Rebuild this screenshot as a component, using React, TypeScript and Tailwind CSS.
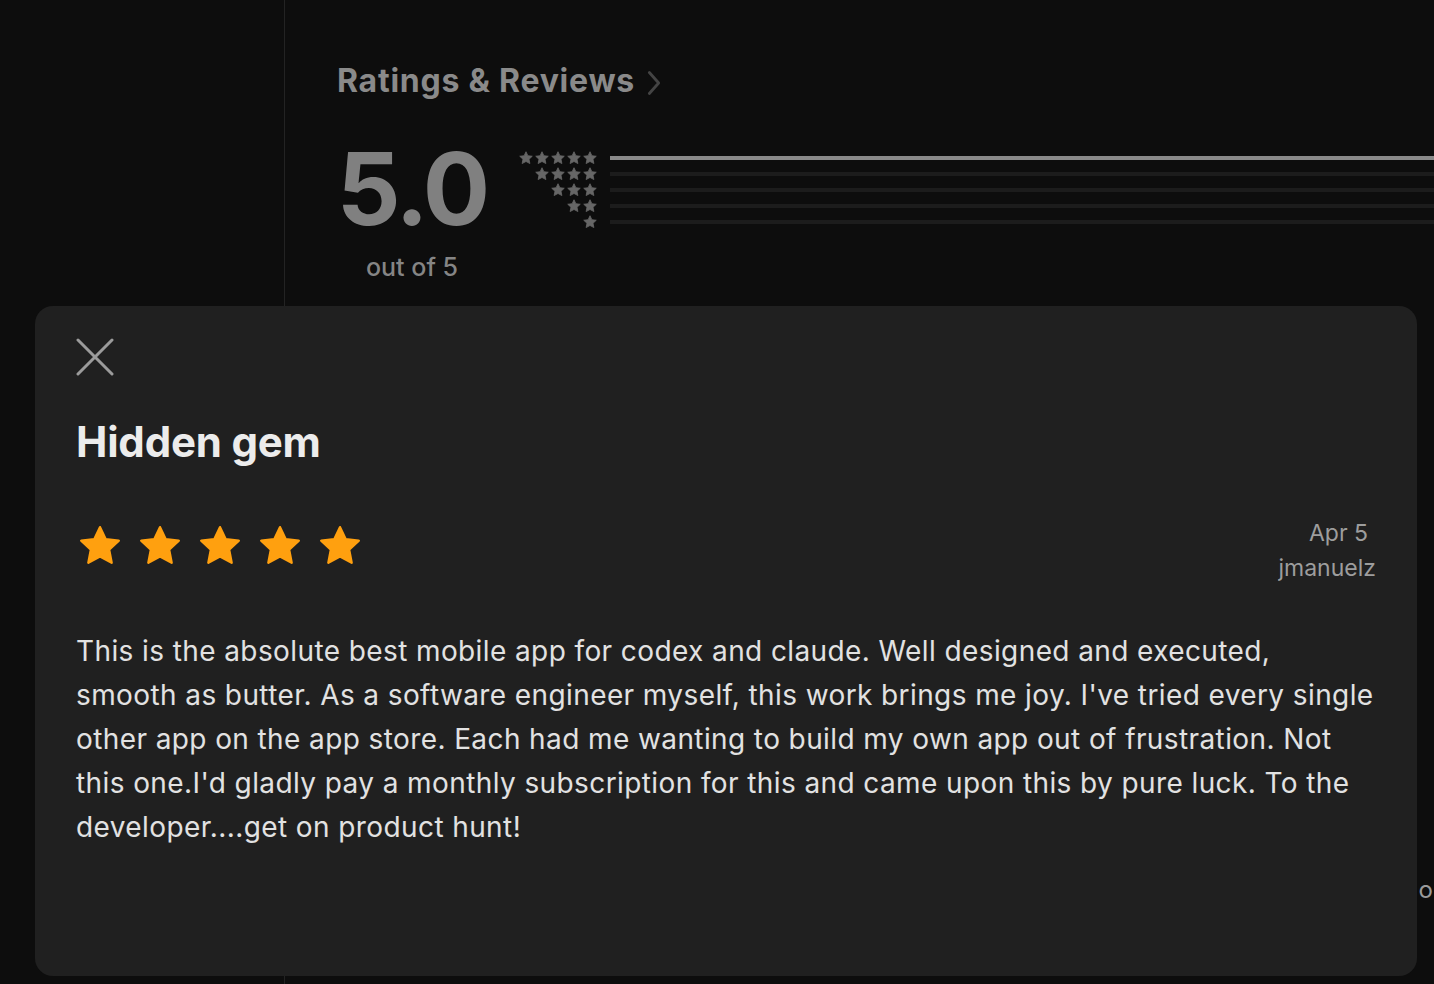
import React from 'react'

const STAR_PATH = 'M12 2.6l2.85 5.98 6.55.78-4.83 4.5 1.25 6.5L12 17.2l-5.82 3.16 1.25-6.5-4.83-4.5 6.55-.78z'

function Star({ className }: { className: string }) {
  return (
    <svg viewBox="0 0 24 24" className={className} fill="currentColor" stroke="currentColor" strokeWidth={1.2} strokeLinejoin="round">
      <path d={STAR_PATH} />
    </svg>
  )
}

const HISTOGRAM = [
  { stars: 5, fill: 100 },
  { stars: 4, fill: 0 },
  { stars: 3, fill: 0 },
  { stars: 2, fill: 0 },
  { stars: 1, fill: 0 },
]

const REVIEW_LINES = [
  'This is the absolute best mobile app for codex and claude. Well designed and executed,',
  "smooth as butter. As a software engineer myself, this work brings me joy. I've tried every single",
  'other app on the app store. Each had me wanting to build my own app out of frustration. Not',
  "this one.I'd gladly pay a monthly subscription for this and came upon this by pure luck. To the",
  'developer....get on product hunt!',
]

export default function App() {
  return (
    <div className="relative h-[984px] w-[1434px] overflow-hidden bg-[#0d0d0d] font-['Inter',sans-serif]">
      <div className="flex h-full">
        <aside className="w-[285px] shrink-0 border-r border-[#232323]" />

        <main className="flex-1 pl-[52px] pt-[57px]">
          <div className="flex items-center gap-3">
            <h2 className="text-[32px] font-bold tracking-[0.75px] text-[#8a8a8a]">Ratings &amp; Reviews</h2>
            <svg viewBox="0 0 12 22" className="mt-1 h-[26px] w-[14px]" fill="none" stroke="#444444" strokeWidth={2.4} strokeLinecap="round" strokeLinejoin="round">
              <path d="M2 2l8 9-8 9" />
            </svg>
          </div>

          <div className="mt-[34px] flex items-start">
            <div className="flex w-[150px] flex-col items-center">
              <span className="text-[100px] leading-[100px] font-bold tracking-[-3px] text-[#808080]">5.0</span>
              <span className="mt-[10px] text-[25px] font-medium text-[#858585]">out of 5</span>
            </div>

            <div className="ml-[30px] mt-[11px] flex flex-1 flex-col gap-0">
              {HISTOGRAM.map((row) => (
                <div key={row.stars} className="flex h-4 items-center">
                  <div className="flex w-[81px] justify-end">
                    {Array.from({ length: row.stars }).map((_, i) => (
                      <Star key={i} className="h-[16px] w-[16px] text-[#666666]" />
                    ))}
                  </div>
                  <div className="ml-[12px] h-[4px] flex-1 bg-[#1c1c1c]">
                    {row.fill > 0 && <div className="h-full w-full bg-[#8a8a8a]" />}
                  </div>
                </div>
              ))}
            </div>
          </div>

          <div className="mt-[585px] flex justify-end">
            <span className="mr-[1px] text-[24px] text-[#9a9a9a]">o</span>
          </div>
        </main>
      </div>

      <div className="absolute left-[35px] right-[17px] top-[306px] bottom-[8px] rounded-[18px] bg-[#202020] px-[41px] pt-[32px]">
        <button className="flex h-[38px] w-[38px] items-center justify-center">
          <svg viewBox="0 0 38 38" className="h-[38px] w-[38px]" fill="none" stroke="#9b9b9b" strokeWidth={3} strokeLinecap="round">
            <path d="M2 2l34 34M36 2L2 36" />
          </svg>
        </button>

        <h1 className="mt-[42px] text-[42px] leading-[48px] font-bold tracking-[-0.2px] text-[#ececec]">Hidden gem</h1>

        <div className="mt-[42px] flex items-start justify-between">
          <div className="mt-[14px] flex gap-[12px]">
            {Array.from({ length: 5 }).map((_, i) => (
              <Star key={i} className="h-[48px] w-[48px] text-[#ffa00f]" />
            ))}
          </div>
          <div className="mt-[8px] flex flex-col items-end text-[23px] leading-[35px] text-[#9d9d9d]">
            <span className="mr-[8px]">Apr 5</span>
            <span>jmanuelz</span>
          </div>
        </div>

        <p className="mt-[43px] whitespace-nowrap text-[28px] leading-[44px] tracking-[0.4px] text-[#e2e2e2]">
          {REVIEW_LINES.map((line, i) => (
            <span key={i} className="block">{line}</span>
          ))}
        </p>
      </div>
    </div>
  )
}
